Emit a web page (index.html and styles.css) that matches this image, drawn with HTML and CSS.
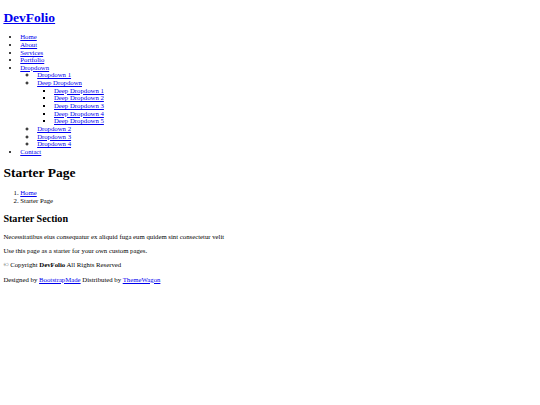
FILE: index.html
```html
<!DOCTYPE html>
<html>
<head>
<meta charset="utf-8">
<title>Starter Page - DevFolio</title>
<link rel="stylesheet" href="styles.css">
</head>
<body class="page">
<header class="header">
  <h1 class="logo"><a class="link" href="#">DevFolio</a></h1>
  <nav class="navmenu">
    <ul class="menu">
      <li><a class="link" href="#">Home</a></li>
      <li><a class="link" href="#">About</a></li>
      <li><a class="link" href="#">Services</a></li>
      <li><a class="link" href="#">Portfolio</a></li>
      <li><a class="link" href="#">Dropdown</a>
        <ul class="submenu">
          <li><a class="link" href="#">Dropdown 1</a></li>
          <li><a class="link" href="#">Deep Dropdown</a>
            <ul class="submenu">
              <li><a class="link" href="#">Deep Dropdown 1</a></li>
              <li><a class="link" href="#">Deep Dropdown 2</a></li>
              <li><a class="link" href="#">Deep Dropdown 3</a></li>
              <li><a class="link" href="#">Deep Dropdown 4</a></li>
              <li><a class="link" href="#">Deep Dropdown 5</a></li>
            </ul>
          </li>
          <li><a class="link" href="#">Dropdown 2</a></li>
          <li><a class="link" href="#">Dropdown 3</a></li>
          <li><a class="link" href="#">Dropdown 4</a></li>
        </ul>
      </li>
      <li><a class="link" href="#">Contact</a></li>
    </ul>
  </nav>
</header>
<main class="main">
  <div class="page-title">
    <h1 class="title">Starter Page</h1>
    <nav class="breadcrumbs">
      <ol class="crumbs">
        <li><a class="link" href="#">Home</a></li>
        <li>Starter Page</li>
      </ol>
    </nav>
  </div>
  <section class="section">
    <h2 class="section-title">Starter Section</h2>
    <p class="text">Necessitatibus eius consequatur ex aliquid fuga eum quidem sint consectetur velit</p>
  </section>
  <section class="section">
    <p class="text">Use this page as a starter for your own custom pages.</p>
  </section>
</main>
<footer class="footer">
  <p class="text">© <span>Copyright</span> <strong class="brand">DevFolio</strong> <span>All Rights Reserved</span></p>
  <p class="text">Designed by <a class="link" href="#">BootstrapMade</a> Distributed by <a class="link" href="#">ThemeWagon</a></p>
</footer>
</body>
</html>
```
FILE: styles.css
```css
html {
  background: #ffffff;
}
.page {
  margin: 3.375px;
  font-family: "Liberation Serif", "Times New Roman", serif;
  font-size: 6.75px;
  line-height: 1.135;
  color: #000000;
}
.link {
  color: #0000ee;
  text-decoration: underline;
}
.logo,
.title {
  font-size: 2em;
  font-weight: bold;
  margin: 0.67em 0;
}
.logo {
  margin: 6.5px 0 8px;
}
.menu,
.crumbs {
  margin: 1em 0;
  padding-left: 16.875px;
}
.submenu {
  margin: 0;
  padding-left: 16.875px;
}
.menu > li {
  list-style-type: disc;
}
.menu > li > .submenu > li {
  list-style-type: circle;
}
.submenu .submenu > li {
  list-style-type: square;
}
.section-title {
  font-size: 1.5em;
  font-weight: bold;
  margin: 0.83em 0;
}
.text {
  margin: 1em 0;
}
.brand {
  font-weight: bold;
}
```
